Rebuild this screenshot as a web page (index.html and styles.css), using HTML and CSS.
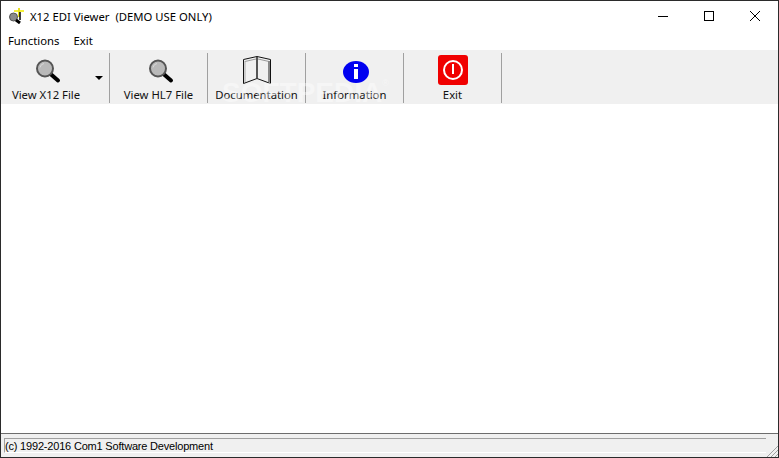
FILE: index.html
```html
<!DOCTYPE html>
<html lang="en">
<head>
    <meta charset="UTF-8">
    <meta name="viewport" content="width=device-width, initial-scale=1.0">
    <title>X12 EDI Viewer</title>
    <link rel="stylesheet" href="styles.css">
</head>
<body>
    <div class="window">
        <div class="titlebar">
            <svg class="app-icon" width="16" height="16" viewBox="0 0 16 16">
                <rect x="6" y="2" width="10" height="2" fill="#f4f03a"/>
                <rect x="10" y="0" width="2" height="9" fill="#e8e020"/>
                <circle cx="5.500" cy="9" r="4" fill="#8a8a8a" stroke="#555"/>
                <path d="M8 12l4 3" stroke="#000" stroke-width="3"/>
                <path d="M12 4v8" stroke="#000" stroke-width="1.500"/>
            </svg>
            <span class="title">X12 EDI Viewer&nbsp; (DEMO USE ONLY)</span>
            <div class="caption-buttons">
                <div class="caption-btn">
                    <svg width="10" height="10" viewBox="0 0 10 10"><path d="M0 5.500h10" stroke="#000"/></svg>
                </div>
                <div class="caption-btn">
                    <svg width="10" height="10" viewBox="0 0 10 10"><rect x=".5" y=".5" width="9" height="9" fill="none" stroke="#000"/></svg>
                </div>
                <div class="caption-btn">
                    <svg width="10" height="10" viewBox="0 0 10 10"><path d="M0 0l10 10M10 0L0 10" stroke="#000"/></svg>
                </div>
            </div>
        </div>

        <div class="menubar">
            <span class="menu-item">Functions</span>
            <span class="menu-item">Exit</span>
        </div>

        <div class="toolbar">
            <div class="tool tool-first">
                <svg class="lens-icon" width="26" height="26" viewBox="0 0 26 26">
                    <use href="#lens" y="1.500"/>
                </svg>
                <span>View X12 File</span>
            </div>
            <div class="tool-drop"><i class="arrow"></i></div>
            <div class="sep"></div>
            <div class="tool">
                <svg class="lens-icon" width="26" height="26" viewBox="0 0 26 26">
                    <use href="#lens" y="1.500"/>
                </svg>
                <span>View HL7 File</span>
            </div>
            <div class="sep"></div>
            <div class="tool">
                <svg width="30" height="30" viewBox="0 -1 30 30">
                    <path d="M1.500 3.500L15 .5l13.500 3v24L15 22.500 1.500 27.500z" fill="#f0f0f0" stroke="#111"/>
                    <path d="M3 5.500l11-2.500M27 5.500L16 3" stroke="#999" fill="none"/>
                    <path d="M15 1v21" stroke="#555" stroke-width="2"/>
                    <path d="M27 5v21" stroke="#888" stroke-width="2"/>
                    <path d="M3 5v21" stroke="#aaa"/>
                </svg>
                <span>Documentation</span>
            </div>
            <div class="sep"></div>
            <div class="tool">
                <svg class="info-icon" width="30" height="30" viewBox="0 -2 30 30">
                    <ellipse cx="15" cy="15" rx="13" ry="11" fill="#0000f0"/>
                    <rect x="13" y="12" width="4" height="10" fill="#fff"/>
                    <rect x="13" y="7" width="4" height="3" fill="#fff"/>
                </svg>
                <span>Information</span>
            </div>
            <div class="sep"></div>
            <div class="tool">
                <svg width="30" height="30" viewBox="0 0 30 30">
                    <rect width="30" height="30" rx="3" fill="#f00000"/>
                    <circle cx="15" cy="15" r="9" fill="none" stroke="#fff" stroke-width="2"/>
                    <path d="M15 9v10" stroke="#fff" stroke-width="2"/>
                </svg>
                <span>Exit</span>
            </div>
            <div class="sep"></div>
            <div class="watermark">SOFTPEDIA<sup>®</sup></div>
        </div>

        <div class="client"></div>

        <div class="statusbar">
            <div class="status-panel">(c) 1992-2016 Com1 Software Development</div>
            <svg class="grip" width="11" height="11" viewBox="0 0 11 11">
                <path d="M0 11L11 0M4 11l7-7M8 11l3-3" stroke="#a0a0a0" fill="none"/>
            </svg>
        </div>
    </div>

    <svg width="0" height="0" class="defs">
        <symbol id="lens" viewBox="0 0 26 26">
            <path d="M15 15l8 7" stroke="#000" stroke-width="4" stroke-linecap="round"/>
            <circle cx="10" cy="10" r="8" fill="#b9b9b9" stroke="#555" stroke-width="2"/>
            <path d="M5 9a5 5 0 0 1 4-4" stroke="#d8d8d8" fill="none"/>
        </symbol>
    </svg>
</body>
</html>
```

FILE: styles.css
```css
* {
    box-sizing: border-box;
}
body {
    margin: 0;
    background-color: #fff;
    font-family: "Noto Sans", "Open Sans", sans-serif;
    font-size: 11.3px;
    color: #000;
}
.window {
    width: 779px;
    height: 458px;
    display: flex;
    flex-direction: column;
    border: 1px solid #2b2b2b;
    overflow: hidden;
}
.titlebar {
    height: 30px;
    display: flex;
    align-items: center;
    padding-left: 7px;
    flex: none;
}
.app-icon {
    margin-top: -1px;
}
.title {
    margin-left: 6px;
}
.caption-buttons {
    margin-left: auto;
    display: flex;
}
.caption-btn {
    width: 46px;
    height: 30px;
    display: flex;
    align-items: center;
    justify-content: center;
}
.menubar {
    height: 19px;
    display: flex;
    align-items: center;
    flex: none;
    padding-left: 7px;
    gap: 14px;
}
.toolbar {
    height: 54px;
    flex: none;
    display: flex;
    align-items: stretch;
    background-color: #f0f0f0;
    position: relative;
}
.tool {
    width: 97px;
    display: flex;
    flex-direction: column;
    align-items: center;
    padding-top: 5px;
    color: #111;
}
.tool svg {
    height: 30px;
    flex: none;
}
.tool span {
    margin-top: 2px;
    white-space: nowrap;
}
.tool .lens-icon {
    margin-left: 4px;
}
.tool .info-icon {
    margin-left: 3px;
}
.tool-first {
    width: 90px;
}
.tool-drop {
    width: 18px;
    position: relative;
}
.arrow {
    position: absolute;
    left: 4px;
    top: 26px;
    border-left: 4px solid transparent;
    border-right: 4px solid transparent;
    border-top: 4px solid #000;
}
.sep {
    width: 1px;
    margin: 3px 0 1px;
    background-color: #a0a0a0;
}
.watermark {
    position: absolute;
    left: 221px;
    top: 27px;
    font-family: "Liberation Sans", sans-serif;
    font-size: 28px;
    font-weight: bold;
    color: #fff;
    opacity: 0.4;
}
.watermark sup {
    font-size: 9px;
    font-weight: normal;
    vertical-align: 16px;
    line-height: 0;
}
.client {
    flex: 1;
    background-color: #fff;
}
.statusbar {
    height: 24px;
    flex: none;
    display: flex;
    background-color: #f0f0f0;
    border-top: 1px solid #6d6d6d;
    position: relative;
    padding: 4px 12px 4px 3px;
}
.status-panel {
    flex: 1;
    height: 15px;
    border-top: 1px solid #a0a0a0;
    border-left: 1px solid #a0a0a0;
    border-bottom: 1px solid #fff;
    font-family: "Liberation Sans", sans-serif;
    font-size: 11px;
    letter-spacing: -0.19px;
    line-height: 14px;
    white-space: nowrap;
}
.grip {
    position: absolute;
    right: 0;
    bottom: 0;
}
.defs {
    position: absolute;
}
```
